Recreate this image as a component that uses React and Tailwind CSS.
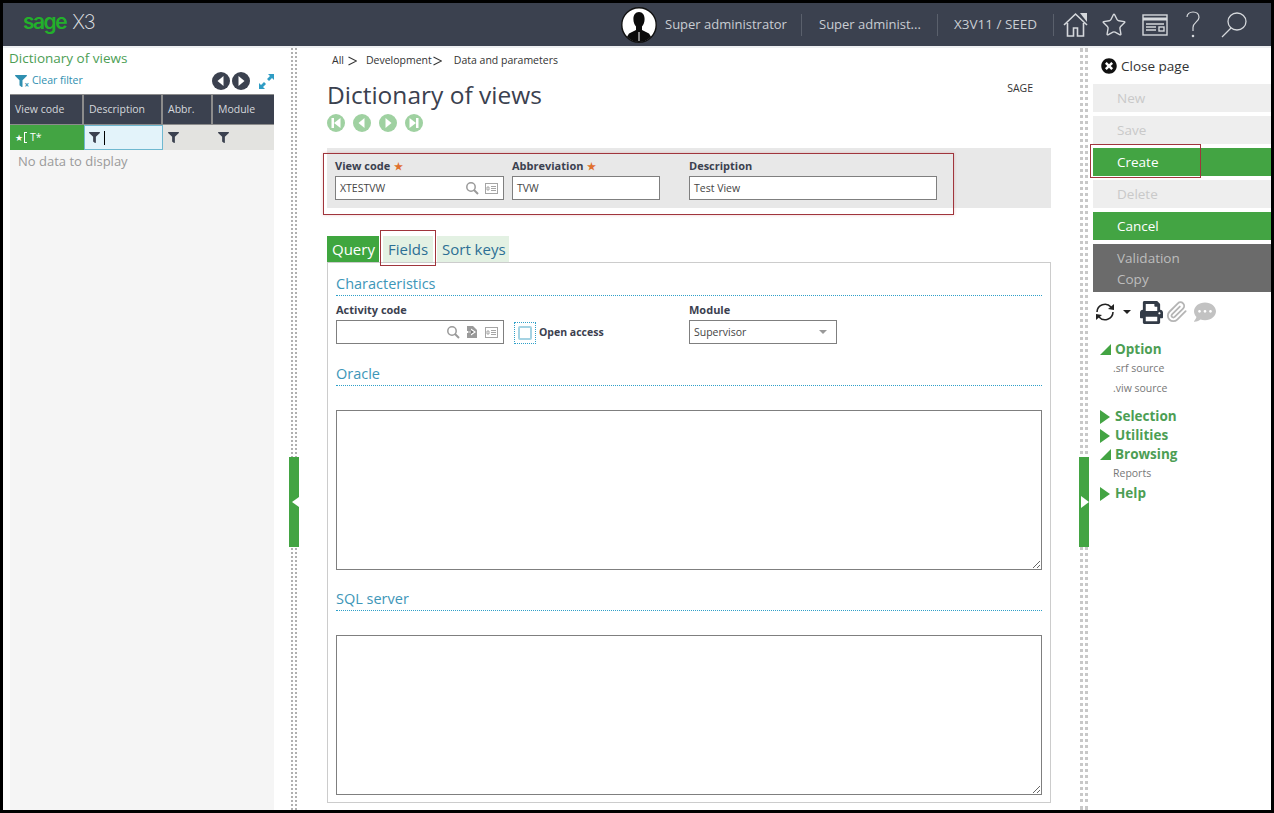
import React from 'react';
import { FaFilter, FaTimesCircle, FaPrint, FaCommentDots } from 'react-icons/fa';
import { FiPaperclip } from 'react-icons/fi';
import { Star } from 'lucide-react';

const RoundNav = ({ dir, color, edge }) => (
    <svg width="18" height="18" viewBox="0 0 18 18">
        <circle cx="9" cy="9" r="9" fill={color} />
        {!edge && dir === 'left' && <polygon points="11.5,4 11.5,14 5.5,9" fill="#fff" />}
        {!edge && dir === 'right' && <polygon points="6.5,4 6.5,14 12.5,9" fill="#fff" />}
        {edge && dir === 'left' && (
            <>
                <rect x="4.5" y="4" width="2.5" height="10" fill="#fff" />
                <polygon points="13.5,4 13.5,14 7,9" fill="#fff" />
            </>
        )}
        {edge && dir === 'right' && (
            <>
                <polygon points="4.5,4 4.5,14 11,9" fill="#fff" />
                <rect x="11" y="4" width="2.5" height="10" fill="#fff" />
            </>
        )}
    </svg>
);

const Lookup = () => (
    <svg width="14" height="14" viewBox="0 0 14 14" fill="none" stroke="#9a9a9a" strokeWidth="1.5">
        <circle cx="6" cy="6" r="4.2" />
        <path d="M9 9l4 4" strokeWidth="2" />
    </svg>
);

const CardIcon = () => (
    <svg width="13" height="11" viewBox="0 0 13 11" fill="none" stroke="#a5a5a5">
        <rect x="0.5" y="0.5" width="12" height="10" />
        <path d="M6 3.5h5M6 5.5h5M6 7.5h5M2 4h2v3H2z" />
    </svg>
);

const Label = ({ children, star }) => (
    <div className="flex items-center h-[14px] text-[11px] leading-[14px] font-bold text-[#3b414f]">
        {children}
        {star && <span className="ml-[4px] text-[#e0702e] text-[10px] leading-none">★</span>}
    </div>
);

const Input = ({ value, className, children, textClass }) => (
    <div className={`h-[24px] flex items-center bg-white border border-[#7f7f7f] pl-[4px] pr-[4px] text-[10.5px] text-[#444] ${className}`}>
        <span className={`flex-1 pt-[2px] ${textClass || ''}`}>{value}</span>
        {children}
    </div>
);

const SectionTitle = ({ children, className }) => (
    <div className={`h-[23px] text-[14.5px] leading-[20px] pt-[1px] text-[#3d96b8] border-b border-dotted border-[#2fa0c8] ${className}`}>
        {children}
    </div>
);

const Splitter = ({ side }) => (
    <div className="relative w-[10px] flex justify-center">
        {side === 'left'
            ? <div className="w-[6px] h-full border-x-2 border-dotted border-[#b0b0b0]"></div>
            : <div className="w-[8px] h-full border-x-[3px] border-dotted border-[#c8c8c8]"></div>}
        <div className="absolute left-0 top-[409px] w-[10px] h-[90px] bg-[#43a443] flex items-center justify-center">
            <svg width="10" height="16" viewBox="0 0 10 16">
                {side === 'left'
                    ? <polygon points="3,8 10,3 10,13" fill="#fff" />
                    : <polygon points="2,2 10,8 2,14" fill="#fff" />}
            </svg>
        </div>
    </div>
);

const ActionButton = ({ children, kind }) => {
    if (kind === 'green') {
        return (
            <div className="relative h-[28px] -mr-[3px] bg-[#43a443] text-white pl-[24px] text-[13.5px] leading-[28px]">
                {children}
            </div>
        );
    }
    return <div className="h-[28px] bg-[#eeeeee] text-[#c9c9c9] pl-[24px] text-[13.5px] leading-[28px]">{children}</div>;
};

const TreeHead = ({ children, open, className }) => (
    <div className={`h-[19px] flex items-center text-[13.5px] font-bold text-[#4c9e54] ${className || ''}`}>
        <span className="w-[22px] pl-[7px] flex items-center">
            {open
                ? <svg width="11" height="11" viewBox="0 0 11 11"><polygon points="11,0 11,11 0,11" fill="#43a443" /></svg>
                : <svg width="10" height="14" viewBox="0 0 10 14"><polygon points="0,0 10,7 0,14" fill="#43a443" /></svg>}
        </span>
        {children}
    </div>
);

const TreeItem = ({ children }) => (
    <div className="h-[19px] pl-[20px] text-[10.5px] leading-[19px] text-[#777]">{children}</div>
);

const Crumb = () => (
    <svg width="9" height="10" viewBox="0 0 9 10" fill="none" stroke="#333" strokeWidth="1.1">
        <path d="M0.5 1l8 4-8 4" />
    </svg>
);

const App = () => {
    return (
        <div className="w-[1274px] h-[813px] overflow-hidden border-[3px] border-black bg-white flex flex-col font-['Open_Sans',sans-serif]">
            {/* top bar */}
            <header className="h-[45px] shrink-0 bg-[#3b414f] border-b-2 border-[#eef0f2] flex items-center text-[#c9cdd3] text-[13px]">
                <div className="pl-[20px] mb-[5px] flex items-baseline font-['Inter',sans-serif]">
                    <span className="text-[21px] leading-[28px] font-semibold tracking-[-1.5px] text-[#23b02b]">sage</span>
                    <span className="ml-[6px] text-[20px] leading-[28px] font-extralight tracking-[-1px] text-[#e4e6e9]">X3</span>
                </div>
                <div className="ml-auto flex items-center">
                    <svg width="36" height="36" viewBox="0 0 36 36">
                        <circle cx="18" cy="18" r="17.2" fill="#fff" stroke="#111" strokeWidth="1.4" />
                        <path d="M18 5c3.6 0 5.6 3 5.6 7 0 3-1 5.6-2.6 7.4V23l7 3.4 2 3.4a16.5 16.5 0 0 1-24 0l2-3.4 7-3.4v-3.6c-1.6-1.8-2.6-4.4-2.6-7.4 0-4 2-7 5.6-7z" fill="#0b0b0b" />
                        <path d="M18 25v9" stroke="#fff" strokeWidth="1" />
                    </svg>
                    <span className="ml-[8px] w-[136px]">Super administrator</span>
                    <span className="h-[22px] border-l border-[#5a606c]"></span>
                    <span className="ml-[17px] w-[118px]">Super administ...</span>
                    <span className="h-[22px] border-l border-[#5a606c]"></span>
                    <span className="ml-[16px] w-[99px] text-[13.5px]">X3V11 / SEED</span>
                    <span className="h-[22px] border-l border-[#5a606c]"></span>
                    <svg className="ml-[9px]" width="25" height="26" viewBox="0 0 25 26" fill="none" stroke="#d5d8dc" strokeWidth="1.6">
                        <path d="M1 13L12.5 2 24 13M4.5 11v13h6v-8h4v8h6V11" />
                        <polygon points="17,1 24,1 24,10" fill="#d5d8dc" stroke="none" />
                    </svg>
                    <Star className="ml-[13px]" size={26} strokeWidth={1.3} color="#d5d8dc" />
                    <svg className="ml-[15px]" width="26" height="22" viewBox="0 0 26 22" fill="none" stroke="#d5d8dc" strokeWidth="1.4">
                        <rect x="1" y="1" width="24" height="20" />
                        <path d="M1 5h24" strokeWidth="3" />
                        <path d="M4 10h18M4 13h10M4 16h10" />
                        <rect x="17" y="13" width="5" height="4" />
                    </svg>
                    <svg className="ml-[18px]" width="14" height="27" viewBox="0 0 14 27" fill="none" stroke="#d5d8dc" strokeWidth="1.2">
                        <path d="M1 6c0-3 2.500-5 6-5s6 2 6 5.500c0 4-6 5-6 10V20" />
                        <circle cx="7" cy="25" r="0.7" />
                    </svg>
                    <svg className="ml-[21px]" width="26" height="26" viewBox="0 0 26 26" fill="none" stroke="#d5d8dc" strokeWidth="1.3">
                        <ellipse cx="16" cy="9.500" rx="9" ry="8.500" />
                        <path d="M10 16L1 25" />
                    </svg>
                    <span className="w-[24px]"></span>
                </div>
            </header>

            <div className="flex-1 flex min-h-0">
                {/* left list */}
                <aside className="w-[286px] pl-[7px] pr-[15px] flex flex-col">
                    <div className="-ml-[1px] text-[13.5px] leading-[20px] text-[#4c9e54]">Dictionary of views</div>
                    <div className="h-[26px] flex items-center">
                        <span className="relative ml-[5px] text-[#2f8fb0]">
                            <FaFilter size={12} />
                            <span className="absolute -right-[2px] -bottom-[2px] text-[8px] leading-[8px] font-bold">×</span>
                        </span>
                        <span className="ml-[5px] text-[10.5px] text-[#2f8fb0]">Clear filter</span>
                        <span className="ml-auto flex items-center gap-[2px]">
                            <RoundNav dir="left" color="#3b414f" />
                            <RoundNav dir="right" color="#3b414f" />
                        </span>
                        <svg className="ml-[9px]" width="15" height="15" viewBox="0 0 15 15" fill="#2f9cc4">
                            <polygon points="9,0 15,0 15,6 13,4 10,7 8,5 11,2" />
                            <polygon points="0,9 2,11 5,8 7,10 4,13 6,15 0,15" />
                        </svg>
                    </div>
                    <div className="flex-1 bg-[#f5f5f5]">
                        <div className="grid grid-cols-[74px_79px_50px_61px] h-[31px] bg-[#3b414f] border-y border-[#8c8c8c] text-[10.5px] text-[#d5d8dc]">
                            <div className="pl-[5px] leading-[29px] border-r-2 border-[#8c8c8c]">View code</div>
                            <div className="pl-[5px] leading-[29px] border-r-2 border-[#8c8c8c]">Description</div>
                            <div className="pl-[5px] leading-[29px] border-r-2 border-[#8c8c8c]">Abbr.</div>
                            <div className="pl-[5px] leading-[29px]">Module</div>
                        </div>
                        <div className="grid grid-cols-[74px_79px_50px_61px] h-[25px] bg-[#e3e3e0] text-[#3b414f]">
                            <div className="bg-[#43a443] text-white flex items-center pl-[5px]">
                                <span className="text-[9px]">★</span>
                                <span className="ml-[1px] w-[3px] h-[11px] border-y border-l border-white"></span>
                                <span className="ml-[3px] text-[10.5px]">T*</span>
                            </div>
                            <div className="bg-[#e3f3fa] border border-[#6fb8d0] flex items-center pl-[4px]">
                                <FaFilter size={11} />
                                <span className="ml-[4px] w-px h-[14px] bg-black"></span>
                            </div>
                            <div className="flex items-center pl-[5px]"><FaFilter size={11} /></div>
                            <div className="flex items-center pl-[5px]"><FaFilter size={11} /></div>
                        </div>
                        <div className="pl-[8px] pt-[1px] text-[13px] leading-[20px] text-[#9a9a9a]">No data to display</div>
                    </div>
                </aside>

                <Splitter side="left" />

                {/* main page */}
                <main className="flex-1 px-[28px] pt-[6px]">
                    <div className="flex items-center h-[14px] text-[10.5px] text-[#333] pl-[5px]">
                        <span>All</span>
                        <span className="ml-[4px] w-[18px]"><Crumb /></span>
                        <span>Development</span>
                        <span className="w-[22px] pl-[1px]"><Crumb /></span>
                        <span>Data and parameters</span>
                    </div>
                    <div className="mt-[10px] flex justify-between">
                        <h1 className="text-[24.5px] leading-[34px] text-[#3b414f]">Dictionary of views</h1>
                        <span className="mt-[3px] mr-[18px] text-[10.5px] leading-[14px] text-[#333]">SAGE</span>
                    </div>
                    <div className="mt-[2px] h-[18px] flex gap-[8px]">
                        <RoundNav dir="left" edge color="#9fd1a1" />
                        <RoundNav dir="left" color="#9fd1a1" />
                        <RoundNav dir="right" color="#9fd1a1" />
                        <RoundNav dir="right" edge color="#9fd1a1" />
                    </div>

                    <div className="relative mt-[16px] h-[60px] bg-[#e8e8e8] pl-[8px] pt-[11px] flex">
                        <div className="w-[169px]">
                            <Label star>View code</Label>
                            <Input value="XTESTVW" className="mt-[3px]">
                                <span className="flex items-center gap-[6px] pr-[1px]"><Lookup /><CardIcon /></span>
                            </Input>
                        </div>
                        <div className="w-[148px] ml-[8px]">
                            <Label star>Abbreviation</Label>
                            <Input value="TVW" className="mt-[3px]" />
                        </div>
                        <div className="w-[248px] ml-[29px]">
                            <Label>Description</Label>
                            <Input value="Test View" className="mt-[3px]" />
                        </div>
                        <div className="absolute -left-[4px] top-[5px] w-[631px] h-[62px] border border-[#a0353c] shadow-[0_0_3px_rgba(200,80,80,0.3)]"></div>
                    </div>

                    <div className="mt-[28px] h-[26px] flex text-[15px] leading-[26px]">
                        <div className="w-[52px] bg-[#3fa63f] text-white pl-[5px]">Query</div>
                        <div className="relative ml-[4px] w-[50px] bg-[#e3f1e3] text-[#2c6f94] pl-[5px]">
                            Fields
                            <div className="absolute -left-[3px] -top-[6px] w-[56px] h-[36px] border border-[#a0353c]"></div>
                        </div>
                        <div className="ml-[4px] w-[72px] bg-[#e3f1e3] text-[#2c6f94] pl-[5px]">Sort keys</div>
                    </div>

                    <div className="h-[541px] border border-[#cccccc] px-[8px] pt-[10px]">
                        <SectionTitle>Characteristics</SectionTitle>
                        <div className="mt-[7px] flex">
                            <div className="w-[168px]">
                                <Label>Activity code</Label>
                                <Input className="mt-[3px]">
                                    <span className="flex items-center gap-[6px] pr-[1px]">
                                        <Lookup />
                                        <svg width="13" height="14" viewBox="0 0 13 14">
                                            <path d="M1 1h6l4 4v8H1z" fill="#9a9a9a" />
                                            <path d="M0 6h5V3.500L10 7l-5 3.500V8H0z" fill="#fff" />
                                            <path d="M2 6.500h3V5l3 2-3 2V7.500H2z" fill="#777" />
                                        </svg>
                                        <CardIcon />
                                    </span>
                                </Input>
                            </div>
                            <div className="ml-[10px] mt-[19px] w-[22px] h-[22px] border border-dotted border-[#2fa0c8] flex items-center justify-center">
                                <span className="w-[14px] h-[14px] rounded-[2px] border-2 border-[#a5d3e3] bg-white"></span>
                            </div>
                            <div className="ml-[3px] mt-[18px] w-[150px] h-[22px] text-[10.5px] leading-[22px] font-bold text-[#3b414f]">Open access</div>
                            <div className="w-[148px]">
                                <Label>Module</Label>
                                <Input value="Supervisor" className="mt-[3px]">
                                    <span className="mr-[5px] w-0 h-0 border-x-[4px] border-x-transparent border-t-[4px] border-t-[#999]"></span>
                                </Input>
                            </div>
                        </div>
                        <SectionTitle className="mt-[19px]">Oracle</SectionTitle>
                        <textarea readOnly className="block mt-[24px] w-full h-[160px] bg-white border border-[#7f7f7f]"></textarea>
                        <SectionTitle className="mt-[18px]">SQL server</SectionTitle>
                        <textarea readOnly className="block mt-[24px] w-full h-[160px] bg-white border border-[#7f7f7f]"></textarea>
                    </div>
                </main>

                <Splitter side="right" />

                {/* action panel */}
                <aside className="w-[182px] pl-[4px] pt-[8px]">
                    <div className="h-[20px] flex items-center pl-[8px] text-[13.5px] text-[#333]">
                        <FaTimesCircle size={16} color="#111" />
                        <span className="ml-[4px]">Close page</span>
                    </div>
                    <div className="mt-[8px] flex flex-col gap-[4px]">
                        <ActionButton>New</ActionButton>
                        <ActionButton>Save</ActionButton>
                        <ActionButton kind="green">
                            Create
                            <div className="absolute -left-[3px] -top-[4px] w-[111px] h-[34px] border border-[#a0353c]"></div>
                        </ActionButton>
                        <ActionButton>Delete</ActionButton>
                        <ActionButton kind="green">Cancel</ActionButton>
                        <div className="h-[48px] bg-[#6b6b6b] text-[#bdbdbd] pl-[24px] pt-[4px] text-[13.5px] leading-[20px]">
                            <div>Validation</div>
                            <div className="mt-px">Copy</div>
                        </div>
                    </div>
                    <div className="mt-[8px] h-[24px] flex items-center pl-[1px]">
                        <svg width="22" height="20" viewBox="0 0 22 20" fill="none" stroke="#222" strokeWidth="1.6">
                            <path d="M3 10a8 8 0 0 1 14-5" />
                            <path d="M19 10a8 8 0 0 1-14 5" />
                            <polygon points="20,2 20,8 14,7" fill="#222" stroke="none" />
                            <polygon points="2,18 2,12 8,13" fill="#222" stroke="none" />
                        </svg>
                        <span className="ml-[7px] w-0 h-0 border-x-[4px] border-x-transparent border-t-[4px] border-t-[#222]"></span>
                        <FaPrint className="ml-[9px]" size={23} color="#333b47" />
                        <FiPaperclip className="ml-[3px]" size={22} color="#b5b5b5" />
                        <FaCommentDots className="ml-[6px]" size={22} color="#c2c2c2" />
                    </div>
                    <div className="mt-[16px]">
                        <TreeHead open>Option</TreeHead>
                        <TreeItem>.srf source</TreeItem>
                        <div className="h-[20px] pl-[20px] text-[10.5px] leading-[21px] text-[#777]">.viw source</div>
                        <TreeHead className="mt-[9px]">Selection</TreeHead>
                        <TreeHead>Utilities</TreeHead>
                        <TreeHead open>Browsing</TreeHead>
                        <TreeItem>Reports</TreeItem>
                        <TreeHead className="mt-[1px]">Help</TreeHead>
                    </div>
                </aside>
            </div>
        </div>
    );
};

export default App;
